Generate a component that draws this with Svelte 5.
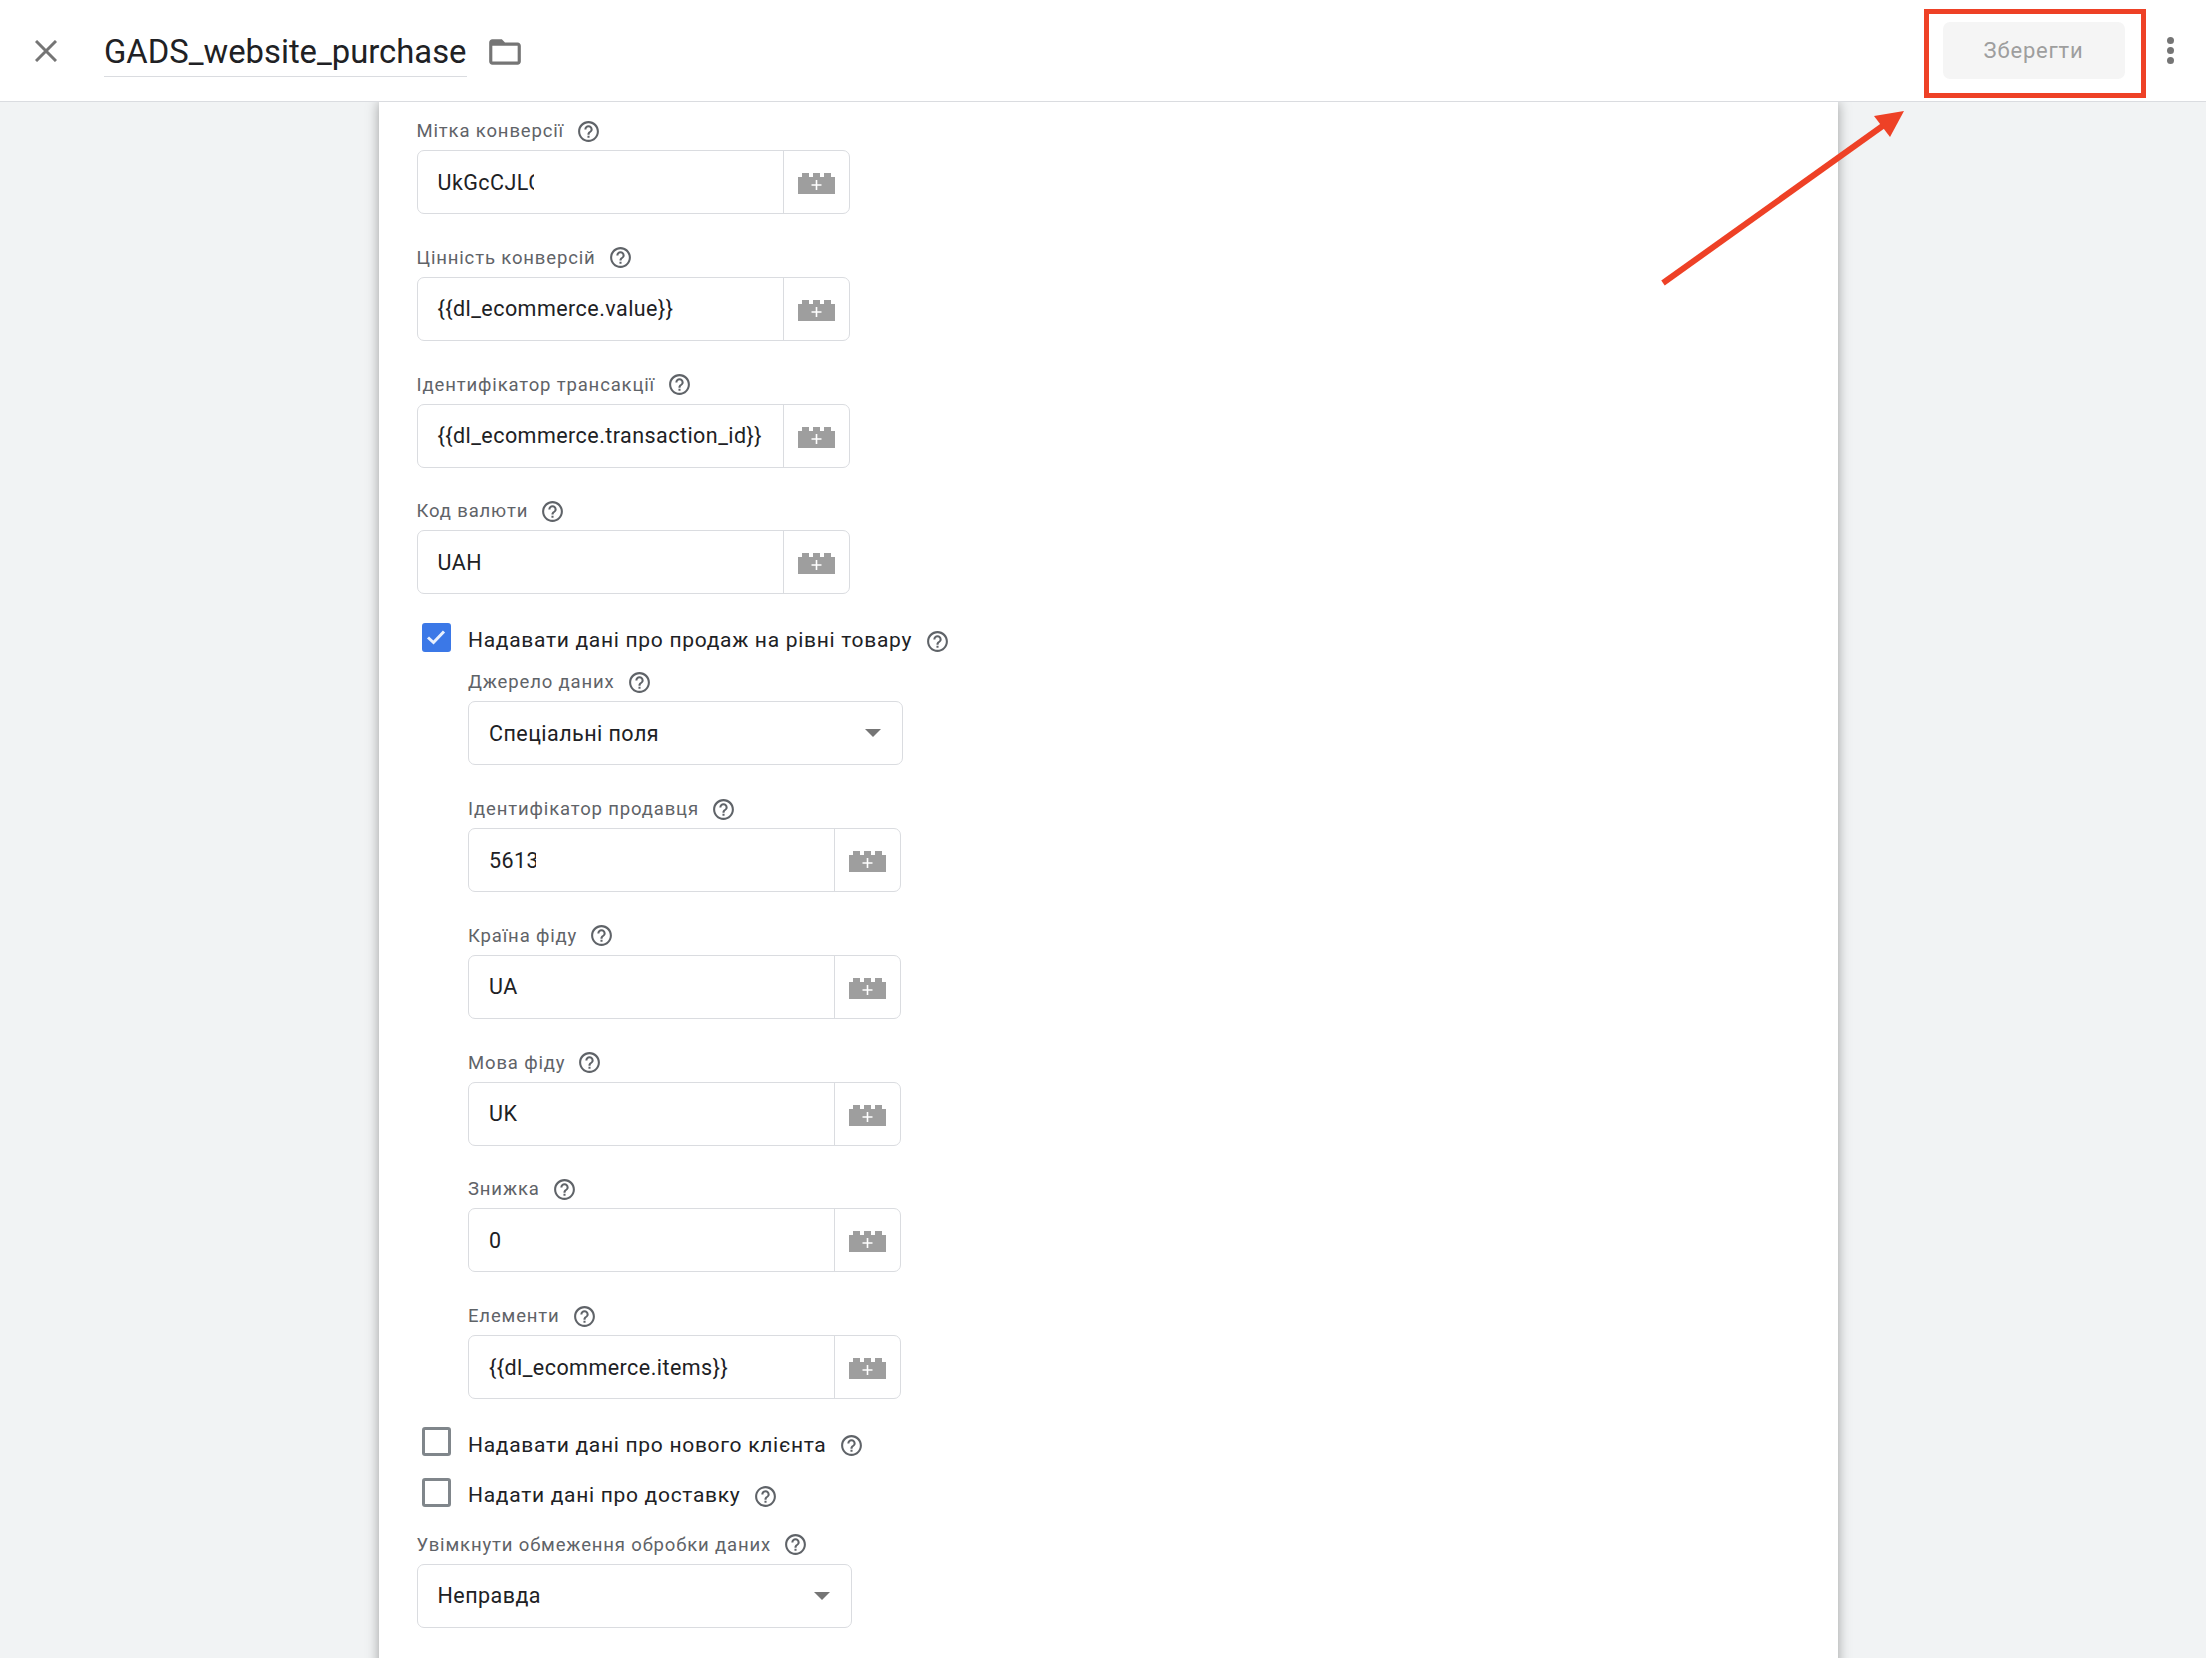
<script lang="ts">
  interface Field {
    label: string;
    value: string;
    clip?: number;
  }

  const topFields: Field[] = [
    { label: 'Мітка конверсії', value: 'UkGcCJLC', clip: 96 },
    { label: 'Цінність конверсій', value: '{{dl_ecommerce.value}}' },
    { label: 'Ідентифікатор трансакції', value: '{{dl_ecommerce.transaction_id}}' },
    { label: 'Код валюти', value: 'UAH' },
  ];

  const itemFields: Field[] = [
    { label: 'Ідентифікатор продавця', value: '5613', clip: 47 },
    { label: 'Країна фіду', value: 'UA' },
    { label: 'Мова фіду', value: 'UK' },
    { label: 'Знижка', value: '0' },
    { label: 'Елементи', value: '{{dl_ecommerce.items}}' },
  ];

  const helpPath =
    'M11 18h2v-2h-2v2zm1-16C6.48 2 2 6.48 2 12s4.48 10 10 10 10-4.48 10-10S17.52 2 12 2zm0 18c-4.41 0-8-3.59-8-8s3.59-8 8-8 8 3.59 8 8-3.59 8-8 8zm0-14c-2.21 0-4 1.79-4 4h2c0-1.1.9-2 2-2s2 .9 2 2c0 2-3 1.75-3 5h2c0-2.25 3-2.5 3-5 0-2.21-1.79-4-4-4z';
</script>

{#snippet help()}
  <svg class="help" viewBox="0 0 24 24"><path d={helpPath} /></svg>
{/snippet}

{#snippet fieldRow(field: Field)}
  <div class="field">
    <div class="label">{field.label}{@render help()}</div>
    <div class="input">
      <div class="value">
        {#if field.clip}
          <span class="clipped" style="width: {field.clip}px">{field.value}</span>
        {:else}
          {field.value}
        {/if}
      </div>
      <div class="var-button">
        <svg width="37" height="21" viewBox="0 0 37 21">
          <path d="M0 4h4V0h7v4h4V0h7v4h4V0h7v4h4v17H0z" />
          <path class="plus" d="M18.5 7v10M13.5 12h10" />
        </svg>
      </div>
    </div>
  </div>
{/snippet}

{#snippet select(value: string)}
  <div class="select">
    <span>{value}</span>
    <svg width="16" height="8" viewBox="0 0 16 8"><path d="M0 0h16L8 8z" /></svg>
  </div>
{/snippet}

<header class="topbar">
  <svg class="close" width="22" height="22" viewBox="0 0 22 22">
    <path d="M1 1l20 20M21 1L1 21" />
  </svg>
  <div class="title">GADS_website_purchase</div>
  <svg class="folder" width="38" height="38" viewBox="0 0 24 24">
    <path d="M20 6h-8l-2-2H4c-1.1 0-1.99.9-1.99 2L2 18c0 1.1.9 2 2 2h16c1.1 0 2-.9 2-2V8c0-1.1-.9-2-2-2zm0 12H4V8h16v10z" />
  </svg>
  <div class="actions">
    <button class="save">Зберегти</button>
    <div class="more"><i></i><i></i><i></i></div>
  </div>
</header>

<main class="page">
  <section class="panel">
    {#each topFields as field}
      {@render fieldRow(field)}
    {/each}

    <div class="check-row parent">
      <span class="box checked">
        <svg width="20" height="16" viewBox="0 0 20 16"><path d="M2 8.5l5.5 5L18 2.5" /></svg>
      </span>
      <span>Надавати дані про продаж на рівні товару</span>
      {@render help()}
    </div>

    <div class="nested">
      <div class="field">
        <div class="label">Джерело даних{@render help()}</div>
        {@render select('Спеціальні поля')}
      </div>
      {#each itemFields as field}
        {@render fieldRow(field)}
      {/each}
    </div>

    <div class="check-row">
      <span class="box"></span>
      <span>Надавати дані про нового клієнта</span>
      {@render help()}
    </div>
    <div class="check-row last">
      <span class="box"></span>
      <span>Надати дані про доставку</span>
      {@render help()}
    </div>

    <div class="field">
      <div class="label">Увімкнути обмеження обробки даних{@render help()}</div>
      {@render select('Неправда')}
    </div>
  </section>
</main>

<!-- annotation drawn over the screenshot -->
<div class="highlight"></div>
<svg class="arrow" width="260" height="190" viewBox="0 0 260 190">
  <path class="shaft" d="M3 173L224 15" />
  <path class="head" d="M244 1L214 6L230 27z" />
</svg>

<style>
  :global(body) {
    margin: 0;
    height: 1658px;
    overflow: hidden;
    background: #f1f3f4;
    font-family: Roboto, 'Noto Sans', sans-serif;
  }

  .topbar {
    display: flex;
    align-items: center;
    height: 101px;
    padding: 0 32.5px 0 35px;
    background: #fff;
    border-bottom: 1px solid #dadce0;
    position: relative;
    z-index: 1;
  }

  .close {
    fill: none;
    stroke: #757575;
    stroke-width: 3;
    margin-top: 1px;
  }

  .title {
    margin-left: 47px;
    font-size: 32.8px;
    line-height: 42px;
    color: #202124;
    border-bottom: 1px solid #dadce0;
    padding-bottom: 3px;
    margin-top: 7px;
  }

  .folder {
    margin-left: 19.5px;
    margin-top: 2px;
    fill: #757575;
  }

  .actions {
    margin-left: auto;
    display: flex;
    align-items: center;
  }

  .save {
    width: 182px;
    height: 57px;
    border: none;
    border-radius: 7px;
    background: #f5f5f5;
    color: #9e9e9e;
    font: 22px Roboto, sans-serif;
    letter-spacing: 0.8px;
  }

  .more {
    display: flex;
    flex-direction: column;
    gap: 3px;
    margin-left: 42px;
  }

  .more i {
    display: block;
    width: 7px;
    height: 7px;
    border-radius: 50%;
    background: #757575;
  }

  .page {
    margin-left: 379px;
    width: 1459px;
  }

  .panel {
    background: #fff;
    padding: 13px 37px 0 37.5px;
    height: 1600px;
    box-sizing: border-box;
    box-shadow: 0 0 12px rgba(0, 0, 0, 0.35);
  }

  .field {
    margin-bottom: 27.75px;
  }

  .label {
    display: flex;
    align-items: center;
    height: 32px;
    margin-bottom: 3px;
    font-size: 18.5px;
    letter-spacing: 0.85px;
    color: #5f6368;
  }

  .help {
    width: 25px;
    height: 25px;
    margin-left: 12px;
    fill: #5f6368;
    flex-shrink: 0;
  }

  .input,
  .select {
    display: flex;
    align-items: center;
    box-sizing: border-box;
    height: 64px;
    background: #fff;
    border: 1px solid #dadce0;
    border-radius: 7px;
    font-size: 21.5px;
    letter-spacing: 0.45px;
    color: #202124;
  }

  .input {
    width: 433px;
  }

  .select {
    width: 435px;
    justify-content: space-between;
    padding: 0 21px 0 20px;
  }

  .select svg {
    fill: #757575;
  }

  .value {
    flex: 1;
    padding-left: 20px;
    white-space: nowrap;
    overflow: hidden;
  }

  .clipped {
    display: block;
    overflow: hidden;
  }

  .var-button {
    display: flex;
    align-items: center;
    justify-content: center;
    width: 65px;
    height: 100%;
    border-left: 1px solid #dadce0;
  }

  .var-button svg {
    fill: #9e9e9e;
    margin-top: 3px;
  }

  .plus {
    fill: none;
    stroke: #fff;
    stroke-width: 1.6;
  }

  .check-row {
    display: flex;
    align-items: center;
    height: 36px;
    margin-bottom: 14.5px;
    font-size: 21px;
    letter-spacing: 0.7px;
    color: #202124;
  }

  .check-row.parent {
    margin-bottom: 8.3px;
  }

  .check-row.last {
    margin-bottom: 15.7px;
  }

  .check-row .help {
    margin-left: 13px;
    margin-top: 2px;
  }

  .box {
    display: flex;
    align-items: center;
    justify-content: center;
    box-sizing: border-box;
    width: 29px;
    height: 29px;
    margin: 0 17.5px 0 5px;
    position: relative;
    top: -3px;
    border: 3px solid #80868b;
    border-radius: 3px;
  }

  .box.checked {
    background: #3b78e7;
    border-color: #3b78e7;
  }

  .box svg {
    fill: none;
    stroke: #e8f0fe;
    stroke-width: 3;
  }

  .nested {
    padding-left: 51.5px;
  }

  .highlight {
    position: absolute;
    left: 1924px;
    top: 9px;
    width: 222px;
    height: 89px;
    box-sizing: border-box;
    border: 5px solid #ee4126;
    z-index: 2;
  }

  .arrow {
    position: absolute;
    left: 1660px;
    top: 110px;
    z-index: 2;
    overflow: visible;
  }

  .shaft {
    fill: none;
    stroke: #ee4126;
    stroke-width: 6;
  }

  .head {
    fill: #ee4126;
  }
</style>
